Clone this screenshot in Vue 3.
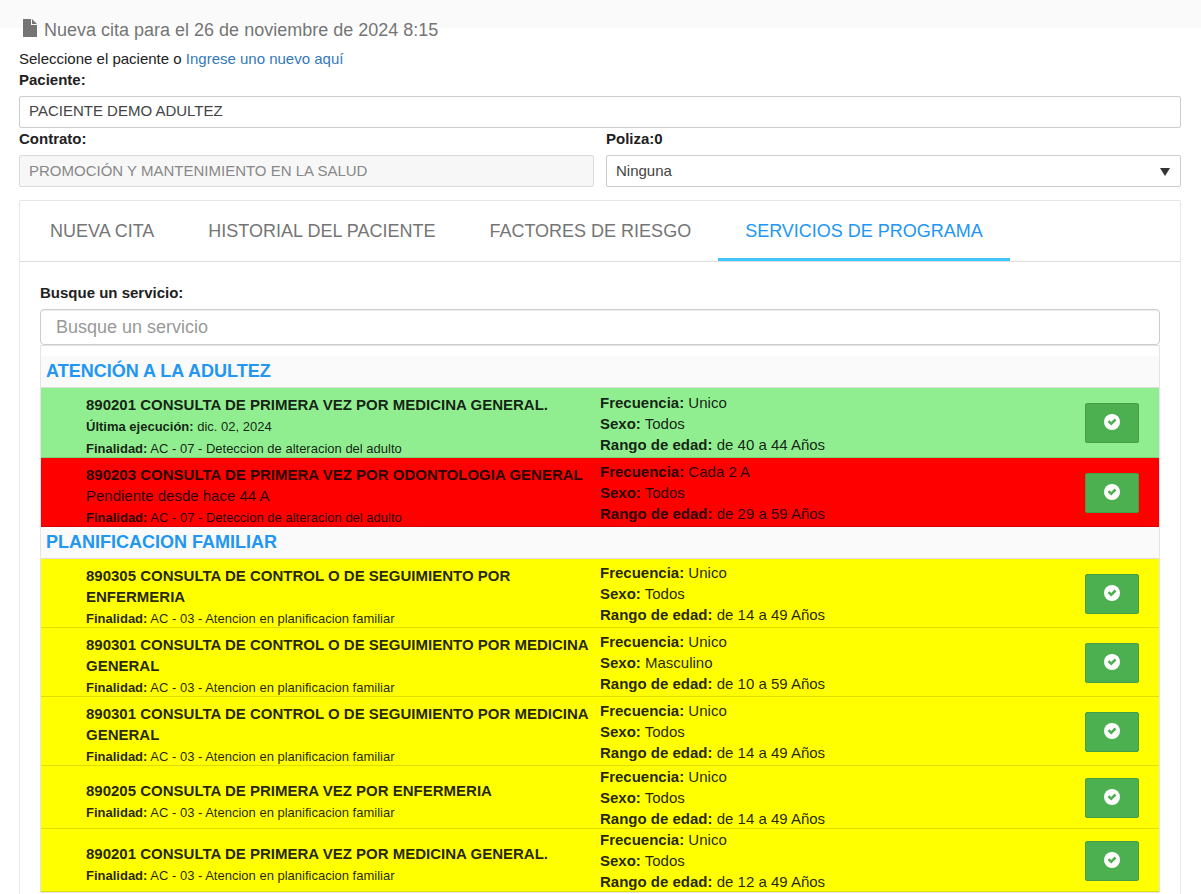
<script setup>
import { ref } from 'vue'

const paciente = ref('PACIENTE DEMO ADULTEZ')
const contrato = 'PROMOCIÓN Y MANTENIMIENTO EN LA SALUD'
const poliza = ref('Ninguna')
const busqueda = ref('')
const tabs = ['NUEVA CITA', 'HISTORIAL DEL PACIENTE', 'FACTORES DE RIESGO', 'SERVICIOS DE PROGRAMA']
const activa = ref(3)

const adulto = 'AC - 07 - Deteccion de alteracion del adulto'
const familiar = 'AC - 03 - Atencion en planificacion familiar'

const programas = [
  {
    nombre: 'ATENCIÓN A LA ADULTEZ',
    servicios: [
      { estado: 'hecho', titulo: '890201 CONSULTA DE PRIMERA VEZ POR MEDICINA GENERAL.', ejecucion: 'dic. 02, 2024', finalidad: adulto, frecuencia: 'Unico', sexo: 'Todos', rango: 'de 40 a 44 Años' },
      { estado: 'vencido', titulo: '890203 CONSULTA DE PRIMERA VEZ POR ODONTOLOGIA GENERAL', pendiente: 'Pendiente desde hace 44 A', finalidad: adulto, frecuencia: 'Cada 2 A', sexo: 'Todos', rango: 'de 29 a 59 Años' },
    ],
  },
  {
    nombre: 'PLANIFICACION FAMILIAR',
    servicios: [
      { estado: 'abierto', titulo: '890305 CONSULTA DE CONTROL O DE SEGUIMIENTO POR ENFERMERIA', finalidad: familiar, frecuencia: 'Unico', sexo: 'Todos', rango: 'de 14 a 49 Años' },
      { estado: 'abierto', titulo: '890301 CONSULTA DE CONTROL O DE SEGUIMIENTO POR MEDICINA GENERAL', finalidad: familiar, frecuencia: 'Unico', sexo: 'Masculino', rango: 'de 10 a 59 Años' },
      { estado: 'abierto', titulo: '890301 CONSULTA DE CONTROL O DE SEGUIMIENTO POR MEDICINA GENERAL', finalidad: familiar, frecuencia: 'Unico', sexo: 'Todos', rango: 'de 14 a 49 Años' },
      { estado: 'abierto', titulo: '890205 CONSULTA DE PRIMERA VEZ POR ENFERMERIA', finalidad: familiar, frecuencia: 'Unico', sexo: 'Todos', rango: 'de 14 a 49 Años' },
      { estado: 'abierto', titulo: '890201 CONSULTA DE PRIMERA VEZ POR MEDICINA GENERAL.', finalidad: familiar, frecuencia: 'Unico', sexo: 'Todos', rango: 'de 12 a 49 Años' },
    ],
  },
]
</script>

<template>
  <main class="page">
    <h1 class="title">
      <svg class="file" viewBox="0 0 14 18" aria-hidden="true">
        <path d="M0 0H8V6H14V18H0Z" />
        <path d="M9 0L14 5H9Z" />
      </svg>
      Nueva cita para el 26 de noviembre de 2024 8:15
    </h1>
    <p class="hint">Seleccione el paciente o <a href="#nuevo">Ingrese uno nuevo aquí</a></p>

    <div class="field">
      <label for="paciente">Paciente:</label>
      <input id="paciente" v-model="paciente" class="control" type="text" />
    </div>
    <div class="pair">
      <div class="field">
        <label for="contrato">Contrato:</label>
        <input id="contrato" class="control" type="text" :value="contrato" disabled />
      </div>
      <div class="field">
        <label for="poliza">Poliza:0</label>
        <div class="drop">
          <select id="poliza" v-model="poliza" class="control">
            <option>Ninguna</option>
          </select>
          <svg class="caret" viewBox="0 0 10 8" aria-hidden="true"><path d="M0 0H10L5 8Z" /></svg>
        </div>
      </div>
    </div>

    <section class="panel">
      <nav class="tabs" role="tablist">
        <button
          v-for="(t, i) in tabs"
          :key="t"
          type="button"
          role="tab"
          class="tab"
          :class="{ active: i === activa }"
          :aria-selected="i === activa"
          @click="activa = i"
        >{{ t }}</button>
      </nav>

      <div class="content">
        <label for="busqueda">Busque un servicio:</label>
        <input id="busqueda" v-model="busqueda" class="search" type="text" placeholder="Busque un servicio" />

        <div class="list">
          <section v-for="p in programas" :key="p.nombre">
            <h2 class="group">{{ p.nombre }}</h2>
            <article v-for="(s, i) in p.servicios" :key="i" class="row" :class="s.estado">
              <div class="service">
                <strong class="name">{{ s.titulo }}</strong>
                <div v-if="s.ejecucion" class="small done"><b>Última ejecución:</b> {{ s.ejecucion }}</div>
                <div v-if="s.pendiente">{{ s.pendiente }}</div>
                <div class="small"><b>Finalidad:</b> {{ s.finalidad }}</div>
              </div>
              <div class="detail">
                <div><b>Frecuencia:</b> {{ s.frecuencia }}</div>
                <div><b>Sexo:</b> {{ s.sexo }}</div>
                <div><b>Rango de edad:</b> {{ s.rango }}</div>
              </div>
              <button type="button" class="pick" aria-label="Seleccionar servicio">
                <svg viewBox="0 0 16 16" aria-hidden="true">
                  <circle cx="8" cy="8" r="8" />
                  <path d="M3.6 8L5.4 6.2L7.2 8L10.6 4.6L12.4 6.4L7.2 11.6Z" />
                </svg>
              </button>
            </article>
          </section>
        </div>
      </div>
    </section>
  </main>
</template>

<style>
html,
body {
  height: 100%;
  overflow: hidden;
}
body {
  margin: 0;
  background: #fff;
}
#app {
  height: 100%;
  overflow: hidden;
}
</style>

<style scoped>
* {
  box-sizing: border-box;
}
.page {
  padding: 19px 20px 0 19px;
  font: 15px/21px "Liberation Sans", Arial, sans-serif;
  color: #212121;
  background: linear-gradient(#fafafa 28px, #fff 28px);
}
.title {
  display: flex;
  align-items: center;
  gap: 7px;
  margin: 0 0 8px;
  padding-left: 4px;
  font-size: 18px;
  font-weight: 400;
  line-height: 20px;
  color: #757575;
}
.file {
  width: 14px;
  height: 18px;
  margin-bottom: 3px;
  fill: #757575;
}
.hint {
  margin: 0;
}
a {
  color: #337ab7;
  text-decoration: none;
}
label {
  display: block;
  font-weight: 700;
}
.control {
  display: block;
  width: 100%;
  height: 32px;
  margin-top: 6px;
  padding: 0 9px 4px;
  border: 1px solid #ccc;
  border-radius: 2px;
  background: #fff;
  font: inherit;
  color: #444;
}
.control:disabled {
  padding-bottom: 2px;
  border-color: #dbdbdb;
  background: #f7f7f7;
  color: #888;
}
select.control {
  appearance: none;
  padding-bottom: 2px;
}
.pair {
  display: grid;
  grid-template-columns: 1fr 1fr;
  gap: 12px;
}
.drop {
  position: relative;
}
.caret {
  position: absolute;
  top: 13px;
  right: 11px;
  width: 10px;
  height: 8px;
  fill: #333;
  pointer-events: none;
}
.panel {
  margin-top: 13px;
  border: 1px solid #e7e7eb;
  border-radius: 2px;
}
.tabs {
  display: flex;
  height: 61px;
  padding-left: 3px;
  border-bottom: 1px solid #ddd;
}
.tab {
  padding: 3px 27px 0;
  border: 0;
  border-bottom: 3px solid transparent;
  background: none;
  font: inherit;
  font-size: 18px;
  color: #757575;
}
.tab.active {
  border-bottom-color: #40c4ff;
  color: #2196f3;
}
.content {
  padding: 20px;
}
.search {
  display: block;
  width: 100%;
  height: 36px;
  margin-top: 6px;
  padding: 0 15px;
  border: 1px solid #ccc;
  border-radius: 4px;
  background: #fff;
  box-shadow: inset 0 1px 1px #eee;
  font: inherit;
  font-size: 18px;
  color: #555;
}
.search::placeholder {
  color: #999;
  opacity: 1;
}
.list {
  padding-top: 10px;
  border: 1px solid #e4e4e8;
}
.group {
  margin: 0;
  padding: 0 5px 1px;
  border-bottom: 1px solid #ddd;
  background: #fafafa;
  font-size: 18px;
  font-weight: 700;
  line-height: 30px;
  color: #2196f3;
}
.row {
  display: grid;
  grid-template-columns: 1fr minmax(0, calc(50% - 74px)) 74px;
  align-items: center;
  box-shadow: inset 0 -1px rgba(0, 0, 0, 0.13);
  color: rgba(0, 0, 0, 0.87);
}
.hecho {
  background: #90ee90;
}
.vencido {
  background: #f00;
}
.abierto {
  background: #ff0;
}
.service {
  padding: 6px 0 0 45px;
}
.name {
  display: block;
}
.small {
  padding-top: 2px;
  font-size: 13px;
  line-height: 19px;
}
.small.done {
  line-height: 20px;
}
.pick {
  display: grid;
  place-items: center;
  width: 54px;
  height: 40px;
  padding: 0 0 2px;
  border: 1px solid #449d48;
  border-radius: 2px;
  background: #4caf50;
}
.pick svg {
  width: 16px;
  height: 16px;
}
.pick circle {
  fill: #fff;
}
.pick path {
  fill: #4caf50;
}
</style>
